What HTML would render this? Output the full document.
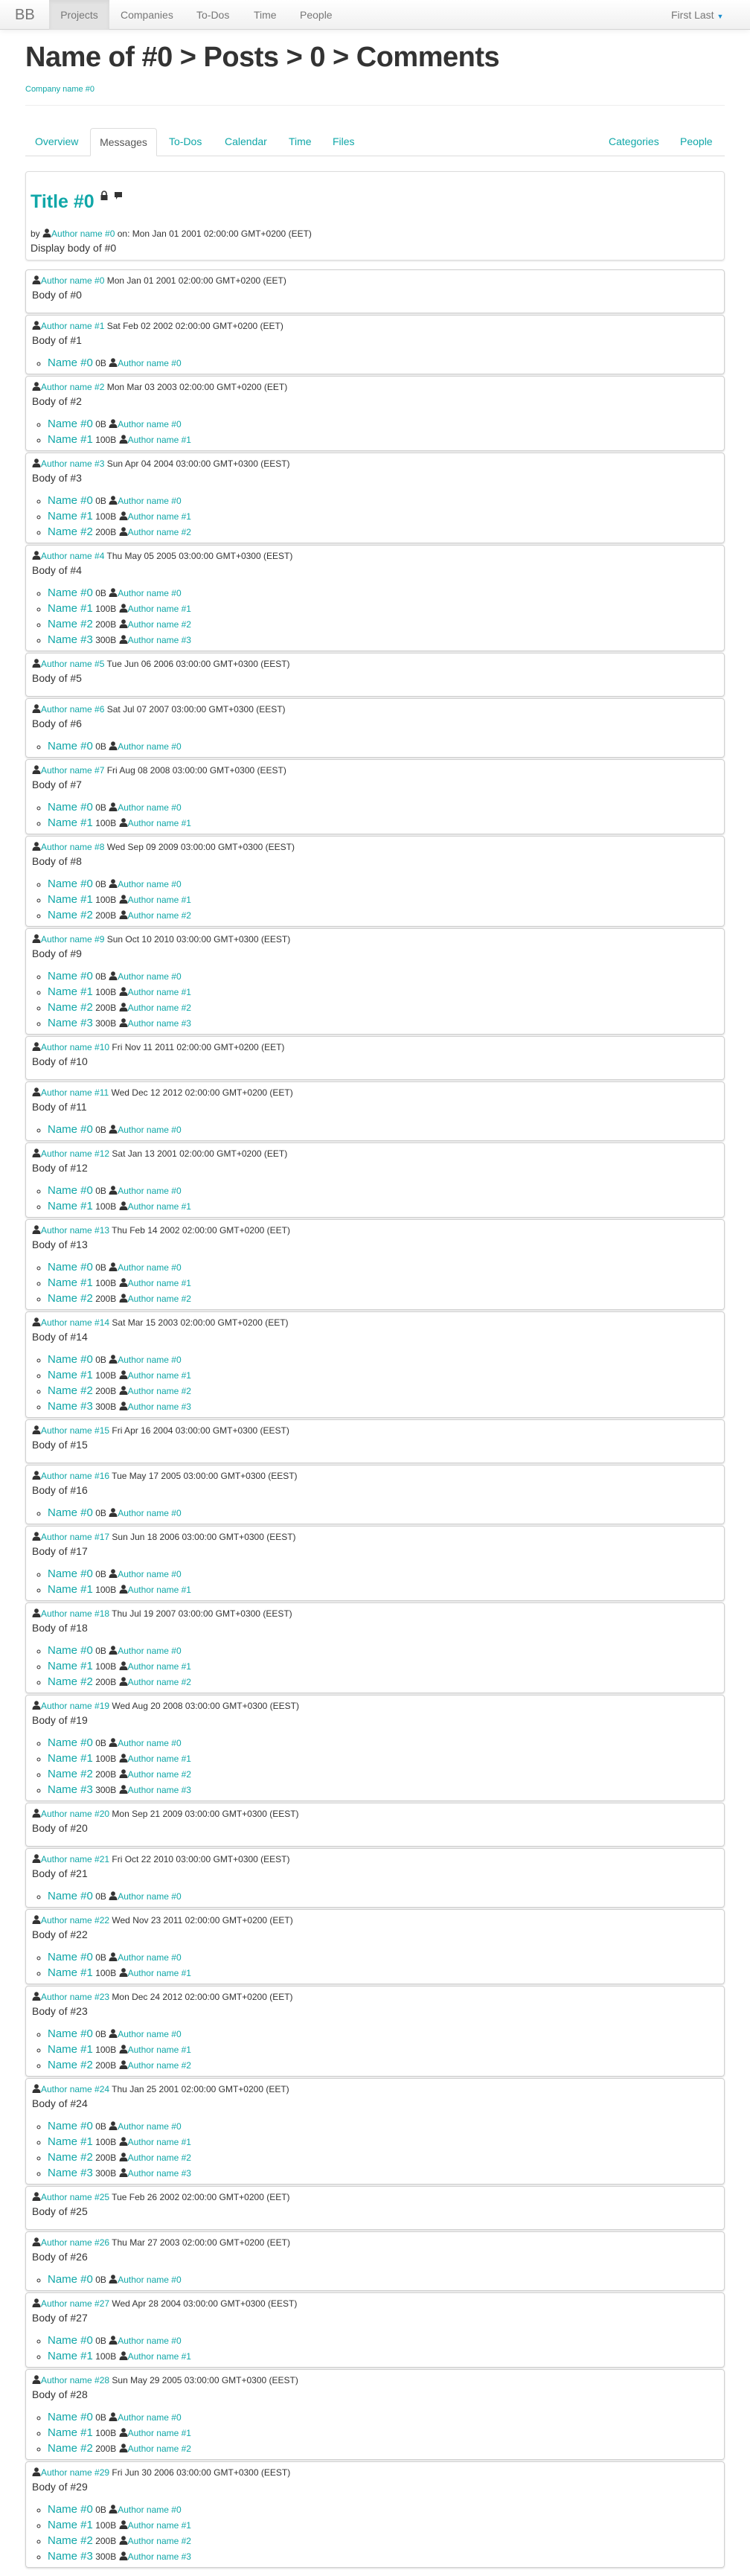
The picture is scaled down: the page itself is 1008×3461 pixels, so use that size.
<!DOCTYPE html>
<html><head><meta charset="utf-8"><style>
*{box-sizing:border-box}
body{margin:0;background:#fff;font-family:"Liberation Sans",Arial,sans-serif;color:#333;font-size:14px;}
a{color:#10a7a8;text-decoration:none}
.nav{position:absolute;top:0;left:0;width:1008px;height:40px;background:linear-gradient(#fff,#f0f0f0);border-bottom:1px solid #d5d5d5;box-shadow:0 1px 8px rgba(0,0,0,.08)}
.nav span{position:absolute;top:0;line-height:40px;color:#777;font-size:14px}
.nav .brand{left:20px;font-size:20px;color:#777}
.nav .act{left:66px;width:81px;height:40px;background:#e3e3e3;text-align:center;box-shadow:inset 0 2px 6px rgba(0,0,0,.06)}
h1{position:absolute;left:34px;top:52px;margin:0;font-size:38px;line-height:50px;font-weight:bold;color:#333;letter-spacing:-0.5px}
.comp{position:absolute;left:34px;top:114px;font-size:11px}
.hr{position:absolute;left:34px;top:141px;width:940px;border-top:1px solid #eee}
.tabs{position:absolute;left:34px;top:172px;width:940px;height:38px;border-bottom:1px solid #ddd}
.tabs a,.tabs .on{position:absolute;top:0;line-height:37px;font-size:14px}
.tabs .on{left:87px;width:90px;height:38px;border:1px solid #ddd;border-bottom-color:#fff;border-radius:4px 4px 0 0;background:#fff;color:#555;text-align:center}
.msg{position:absolute;left:34px;top:230px;width:940px;height:120px;border:1px solid #ddd;border-radius:4px;box-shadow:0 1px 2px rgba(0,0,0,.12);padding:0 6px}
.msg h2{margin:23px 0 0;font-size:25px;line-height:34px;color:#10a7a8}
.msg h2 svg{vertical-align:top;margin-top:2px}
.msg .by{margin-top:17px;font-size:12px;line-height:18px}
.msg .b{font-size:14px;line-height:20px}
.list{position:absolute;left:34px;top:362px;width:940px}
.c{border:1px solid #d0d0d0;border-radius:4px;padding:5px 8px 4px;margin-bottom:2px;box-shadow:0 1px 2px rgba(0,0,0,.15)}
.c .h{font-size:12px;line-height:18px;height:18px;white-space:nowrap}
.c .b{font-size:14px;line-height:20px;margin-bottom:10px}
.c ul{margin:0;padding:0 0 0 21px;list-style:circle}
.c li{line-height:21px;height:21px;font-size:12px;color:#333}
.c li::marker{font-size:12px}
.c li .n{font-size:15px}
.u{display:inline-block;width:12px;height:12px;vertical-align:-1px}
</style></head><body>
<svg width="0" height="0" style="position:absolute"><defs><symbol id="p" viewBox="0 0 12 12"><circle cx="6" cy="3.2" r="2.9" fill="#333"/><path d="M0.5 12 C0.5 7.5 3 6.5 6 6.5 C9 6.5 11.5 7.5 11.5 12 Z" fill="#333"/></symbol></defs></svg>
<div class="nav"><span class="brand">BB</span><span class="act">Projects</span><span style="left:162px">Companies</span><span style="left:264px">To-Dos</span><span style="left:341px">Time</span><span style="left:403px">People</span><span style="left:902px">First Last <b style="color:#1b8fd0;font-size:9px">▼</b></span></div>
<h1>Name of #0 &gt; Posts &gt; 0 &gt; Comments</h1>
<a class="comp" href="#">Company name #0</a>
<div class="hr"></div>
<div class="tabs"><a style="left:13px" href="#">Overview</a><span class="on">Messages</span><a style="left:193px" href="#">To-Dos</a><a style="left:268px" href="#">Calendar</a><a style="left:354px" href="#">Time</a><a style="left:413px" href="#">Files</a><a style="left:784px" href="#">Categories</a><a style="left:880px" href="#">People</a></div>
<div class="msg"><h2>Title #0 <svg width="12" height="14" viewBox="0 0 12 14"><path d="M3 6V4a3 3 0 0 1 6 0v2" stroke="#333" stroke-width="1.6" fill="none"/><rect x="1.5" y="6" width="9" height="7" fill="#333"/></svg> <svg width="12" height="14" viewBox="0 0 12 14"><path d="M1 2h10v7H5l-2 3V9H1z" fill="#333"/></svg></h2>
<div class="by">by <svg class="u"><use href="#p"/></svg><a href="#">Author name #0</a> on: Mon Jan 01 2001 02:00:00 GMT+0200 (EET)</div>
<div class="b">Display body of #0</div></div>
<div class="list">
<div class="c"><div class="h"><svg class="u"><use href="#p"/></svg><a href="#">Author name #0</a> Mon Jan 01 2001 02:00:00 GMT+0200 (EET)</div><div class="b">Body of #0</div></div>
<div class="c"><div class="h"><svg class="u"><use href="#p"/></svg><a href="#">Author name #1</a> Sat Feb 02 2002 02:00:00 GMT+0200 (EET)</div><div class="b">Body of #1</div><ul><li><a class="n" href="#">Name #0</a> 0B <svg class="u"><use href="#p"/></svg><a href="#">Author name #0</a></li></ul></div>
<div class="c"><div class="h"><svg class="u"><use href="#p"/></svg><a href="#">Author name #2</a> Mon Mar 03 2003 02:00:00 GMT+0200 (EET)</div><div class="b">Body of #2</div><ul><li><a class="n" href="#">Name #0</a> 0B <svg class="u"><use href="#p"/></svg><a href="#">Author name #0</a></li><li><a class="n" href="#">Name #1</a> 100B <svg class="u"><use href="#p"/></svg><a href="#">Author name #1</a></li></ul></div>
<div class="c"><div class="h"><svg class="u"><use href="#p"/></svg><a href="#">Author name #3</a> Sun Apr 04 2004 03:00:00 GMT+0300 (EEST)</div><div class="b">Body of #3</div><ul><li><a class="n" href="#">Name #0</a> 0B <svg class="u"><use href="#p"/></svg><a href="#">Author name #0</a></li><li><a class="n" href="#">Name #1</a> 100B <svg class="u"><use href="#p"/></svg><a href="#">Author name #1</a></li><li><a class="n" href="#">Name #2</a> 200B <svg class="u"><use href="#p"/></svg><a href="#">Author name #2</a></li></ul></div>
<div class="c"><div class="h"><svg class="u"><use href="#p"/></svg><a href="#">Author name #4</a> Thu May 05 2005 03:00:00 GMT+0300 (EEST)</div><div class="b">Body of #4</div><ul><li><a class="n" href="#">Name #0</a> 0B <svg class="u"><use href="#p"/></svg><a href="#">Author name #0</a></li><li><a class="n" href="#">Name #1</a> 100B <svg class="u"><use href="#p"/></svg><a href="#">Author name #1</a></li><li><a class="n" href="#">Name #2</a> 200B <svg class="u"><use href="#p"/></svg><a href="#">Author name #2</a></li><li><a class="n" href="#">Name #3</a> 300B <svg class="u"><use href="#p"/></svg><a href="#">Author name #3</a></li></ul></div>
<div class="c"><div class="h"><svg class="u"><use href="#p"/></svg><a href="#">Author name #5</a> Tue Jun 06 2006 03:00:00 GMT+0300 (EEST)</div><div class="b">Body of #5</div></div>
<div class="c"><div class="h"><svg class="u"><use href="#p"/></svg><a href="#">Author name #6</a> Sat Jul 07 2007 03:00:00 GMT+0300 (EEST)</div><div class="b">Body of #6</div><ul><li><a class="n" href="#">Name #0</a> 0B <svg class="u"><use href="#p"/></svg><a href="#">Author name #0</a></li></ul></div>
<div class="c"><div class="h"><svg class="u"><use href="#p"/></svg><a href="#">Author name #7</a> Fri Aug 08 2008 03:00:00 GMT+0300 (EEST)</div><div class="b">Body of #7</div><ul><li><a class="n" href="#">Name #0</a> 0B <svg class="u"><use href="#p"/></svg><a href="#">Author name #0</a></li><li><a class="n" href="#">Name #1</a> 100B <svg class="u"><use href="#p"/></svg><a href="#">Author name #1</a></li></ul></div>
<div class="c"><div class="h"><svg class="u"><use href="#p"/></svg><a href="#">Author name #8</a> Wed Sep 09 2009 03:00:00 GMT+0300 (EEST)</div><div class="b">Body of #8</div><ul><li><a class="n" href="#">Name #0</a> 0B <svg class="u"><use href="#p"/></svg><a href="#">Author name #0</a></li><li><a class="n" href="#">Name #1</a> 100B <svg class="u"><use href="#p"/></svg><a href="#">Author name #1</a></li><li><a class="n" href="#">Name #2</a> 200B <svg class="u"><use href="#p"/></svg><a href="#">Author name #2</a></li></ul></div>
<div class="c"><div class="h"><svg class="u"><use href="#p"/></svg><a href="#">Author name #9</a> Sun Oct 10 2010 03:00:00 GMT+0300 (EEST)</div><div class="b">Body of #9</div><ul><li><a class="n" href="#">Name #0</a> 0B <svg class="u"><use href="#p"/></svg><a href="#">Author name #0</a></li><li><a class="n" href="#">Name #1</a> 100B <svg class="u"><use href="#p"/></svg><a href="#">Author name #1</a></li><li><a class="n" href="#">Name #2</a> 200B <svg class="u"><use href="#p"/></svg><a href="#">Author name #2</a></li><li><a class="n" href="#">Name #3</a> 300B <svg class="u"><use href="#p"/></svg><a href="#">Author name #3</a></li></ul></div>
<div class="c"><div class="h"><svg class="u"><use href="#p"/></svg><a href="#">Author name #10</a> Fri Nov 11 2011 02:00:00 GMT+0200 (EET)</div><div class="b">Body of #10</div></div>
<div class="c"><div class="h"><svg class="u"><use href="#p"/></svg><a href="#">Author name #11</a> Wed Dec 12 2012 02:00:00 GMT+0200 (EET)</div><div class="b">Body of #11</div><ul><li><a class="n" href="#">Name #0</a> 0B <svg class="u"><use href="#p"/></svg><a href="#">Author name #0</a></li></ul></div>
<div class="c"><div class="h"><svg class="u"><use href="#p"/></svg><a href="#">Author name #12</a> Sat Jan 13 2001 02:00:00 GMT+0200 (EET)</div><div class="b">Body of #12</div><ul><li><a class="n" href="#">Name #0</a> 0B <svg class="u"><use href="#p"/></svg><a href="#">Author name #0</a></li><li><a class="n" href="#">Name #1</a> 100B <svg class="u"><use href="#p"/></svg><a href="#">Author name #1</a></li></ul></div>
<div class="c"><div class="h"><svg class="u"><use href="#p"/></svg><a href="#">Author name #13</a> Thu Feb 14 2002 02:00:00 GMT+0200 (EET)</div><div class="b">Body of #13</div><ul><li><a class="n" href="#">Name #0</a> 0B <svg class="u"><use href="#p"/></svg><a href="#">Author name #0</a></li><li><a class="n" href="#">Name #1</a> 100B <svg class="u"><use href="#p"/></svg><a href="#">Author name #1</a></li><li><a class="n" href="#">Name #2</a> 200B <svg class="u"><use href="#p"/></svg><a href="#">Author name #2</a></li></ul></div>
<div class="c"><div class="h"><svg class="u"><use href="#p"/></svg><a href="#">Author name #14</a> Sat Mar 15 2003 02:00:00 GMT+0200 (EET)</div><div class="b">Body of #14</div><ul><li><a class="n" href="#">Name #0</a> 0B <svg class="u"><use href="#p"/></svg><a href="#">Author name #0</a></li><li><a class="n" href="#">Name #1</a> 100B <svg class="u"><use href="#p"/></svg><a href="#">Author name #1</a></li><li><a class="n" href="#">Name #2</a> 200B <svg class="u"><use href="#p"/></svg><a href="#">Author name #2</a></li><li><a class="n" href="#">Name #3</a> 300B <svg class="u"><use href="#p"/></svg><a href="#">Author name #3</a></li></ul></div>
<div class="c"><div class="h"><svg class="u"><use href="#p"/></svg><a href="#">Author name #15</a> Fri Apr 16 2004 03:00:00 GMT+0300 (EEST)</div><div class="b">Body of #15</div></div>
<div class="c"><div class="h"><svg class="u"><use href="#p"/></svg><a href="#">Author name #16</a> Tue May 17 2005 03:00:00 GMT+0300 (EEST)</div><div class="b">Body of #16</div><ul><li><a class="n" href="#">Name #0</a> 0B <svg class="u"><use href="#p"/></svg><a href="#">Author name #0</a></li></ul></div>
<div class="c"><div class="h"><svg class="u"><use href="#p"/></svg><a href="#">Author name #17</a> Sun Jun 18 2006 03:00:00 GMT+0300 (EEST)</div><div class="b">Body of #17</div><ul><li><a class="n" href="#">Name #0</a> 0B <svg class="u"><use href="#p"/></svg><a href="#">Author name #0</a></li><li><a class="n" href="#">Name #1</a> 100B <svg class="u"><use href="#p"/></svg><a href="#">Author name #1</a></li></ul></div>
<div class="c"><div class="h"><svg class="u"><use href="#p"/></svg><a href="#">Author name #18</a> Thu Jul 19 2007 03:00:00 GMT+0300 (EEST)</div><div class="b">Body of #18</div><ul><li><a class="n" href="#">Name #0</a> 0B <svg class="u"><use href="#p"/></svg><a href="#">Author name #0</a></li><li><a class="n" href="#">Name #1</a> 100B <svg class="u"><use href="#p"/></svg><a href="#">Author name #1</a></li><li><a class="n" href="#">Name #2</a> 200B <svg class="u"><use href="#p"/></svg><a href="#">Author name #2</a></li></ul></div>
<div class="c"><div class="h"><svg class="u"><use href="#p"/></svg><a href="#">Author name #19</a> Wed Aug 20 2008 03:00:00 GMT+0300 (EEST)</div><div class="b">Body of #19</div><ul><li><a class="n" href="#">Name #0</a> 0B <svg class="u"><use href="#p"/></svg><a href="#">Author name #0</a></li><li><a class="n" href="#">Name #1</a> 100B <svg class="u"><use href="#p"/></svg><a href="#">Author name #1</a></li><li><a class="n" href="#">Name #2</a> 200B <svg class="u"><use href="#p"/></svg><a href="#">Author name #2</a></li><li><a class="n" href="#">Name #3</a> 300B <svg class="u"><use href="#p"/></svg><a href="#">Author name #3</a></li></ul></div>
<div class="c"><div class="h"><svg class="u"><use href="#p"/></svg><a href="#">Author name #20</a> Mon Sep 21 2009 03:00:00 GMT+0300 (EEST)</div><div class="b">Body of #20</div></div>
<div class="c"><div class="h"><svg class="u"><use href="#p"/></svg><a href="#">Author name #21</a> Fri Oct 22 2010 03:00:00 GMT+0300 (EEST)</div><div class="b">Body of #21</div><ul><li><a class="n" href="#">Name #0</a> 0B <svg class="u"><use href="#p"/></svg><a href="#">Author name #0</a></li></ul></div>
<div class="c"><div class="h"><svg class="u"><use href="#p"/></svg><a href="#">Author name #22</a> Wed Nov 23 2011 02:00:00 GMT+0200 (EET)</div><div class="b">Body of #22</div><ul><li><a class="n" href="#">Name #0</a> 0B <svg class="u"><use href="#p"/></svg><a href="#">Author name #0</a></li><li><a class="n" href="#">Name #1</a> 100B <svg class="u"><use href="#p"/></svg><a href="#">Author name #1</a></li></ul></div>
<div class="c"><div class="h"><svg class="u"><use href="#p"/></svg><a href="#">Author name #23</a> Mon Dec 24 2012 02:00:00 GMT+0200 (EET)</div><div class="b">Body of #23</div><ul><li><a class="n" href="#">Name #0</a> 0B <svg class="u"><use href="#p"/></svg><a href="#">Author name #0</a></li><li><a class="n" href="#">Name #1</a> 100B <svg class="u"><use href="#p"/></svg><a href="#">Author name #1</a></li><li><a class="n" href="#">Name #2</a> 200B <svg class="u"><use href="#p"/></svg><a href="#">Author name #2</a></li></ul></div>
<div class="c"><div class="h"><svg class="u"><use href="#p"/></svg><a href="#">Author name #24</a> Thu Jan 25 2001 02:00:00 GMT+0200 (EET)</div><div class="b">Body of #24</div><ul><li><a class="n" href="#">Name #0</a> 0B <svg class="u"><use href="#p"/></svg><a href="#">Author name #0</a></li><li><a class="n" href="#">Name #1</a> 100B <svg class="u"><use href="#p"/></svg><a href="#">Author name #1</a></li><li><a class="n" href="#">Name #2</a> 200B <svg class="u"><use href="#p"/></svg><a href="#">Author name #2</a></li><li><a class="n" href="#">Name #3</a> 300B <svg class="u"><use href="#p"/></svg><a href="#">Author name #3</a></li></ul></div>
<div class="c"><div class="h"><svg class="u"><use href="#p"/></svg><a href="#">Author name #25</a> Tue Feb 26 2002 02:00:00 GMT+0200 (EET)</div><div class="b">Body of #25</div></div>
<div class="c"><div class="h"><svg class="u"><use href="#p"/></svg><a href="#">Author name #26</a> Thu Mar 27 2003 02:00:00 GMT+0200 (EET)</div><div class="b">Body of #26</div><ul><li><a class="n" href="#">Name #0</a> 0B <svg class="u"><use href="#p"/></svg><a href="#">Author name #0</a></li></ul></div>
<div class="c"><div class="h"><svg class="u"><use href="#p"/></svg><a href="#">Author name #27</a> Wed Apr 28 2004 03:00:00 GMT+0300 (EEST)</div><div class="b">Body of #27</div><ul><li><a class="n" href="#">Name #0</a> 0B <svg class="u"><use href="#p"/></svg><a href="#">Author name #0</a></li><li><a class="n" href="#">Name #1</a> 100B <svg class="u"><use href="#p"/></svg><a href="#">Author name #1</a></li></ul></div>
<div class="c"><div class="h"><svg class="u"><use href="#p"/></svg><a href="#">Author name #28</a> Sun May 29 2005 03:00:00 GMT+0300 (EEST)</div><div class="b">Body of #28</div><ul><li><a class="n" href="#">Name #0</a> 0B <svg class="u"><use href="#p"/></svg><a href="#">Author name #0</a></li><li><a class="n" href="#">Name #1</a> 100B <svg class="u"><use href="#p"/></svg><a href="#">Author name #1</a></li><li><a class="n" href="#">Name #2</a> 200B <svg class="u"><use href="#p"/></svg><a href="#">Author name #2</a></li></ul></div>
<div class="c"><div class="h"><svg class="u"><use href="#p"/></svg><a href="#">Author name #29</a> Fri Jun 30 2006 03:00:00 GMT+0300 (EEST)</div><div class="b">Body of #29</div><ul><li><a class="n" href="#">Name #0</a> 0B <svg class="u"><use href="#p"/></svg><a href="#">Author name #0</a></li><li><a class="n" href="#">Name #1</a> 100B <svg class="u"><use href="#p"/></svg><a href="#">Author name #1</a></li><li><a class="n" href="#">Name #2</a> 200B <svg class="u"><use href="#p"/></svg><a href="#">Author name #2</a></li><li><a class="n" href="#">Name #3</a> 300B <svg class="u"><use href="#p"/></svg><a href="#">Author name #3</a></li></ul></div>
</div>
</body></html>
